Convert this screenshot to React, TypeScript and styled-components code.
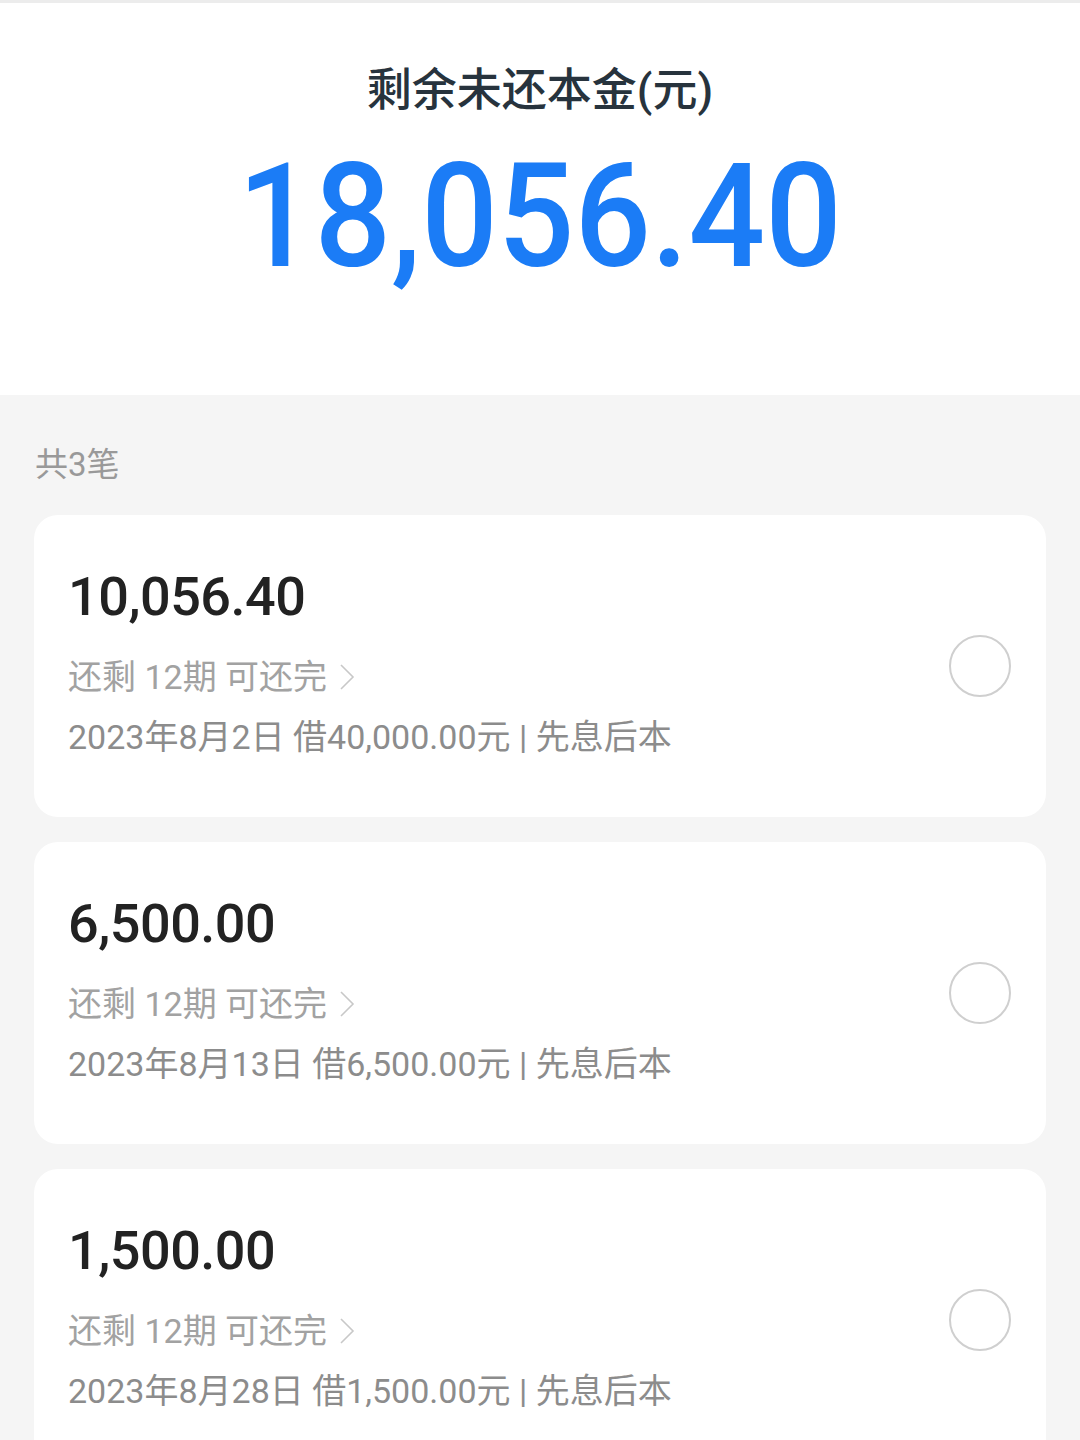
import styled, { createGlobalStyle } from 'styled-components';

const GlobalStyle = createGlobalStyle`
  html, body {
    margin: 0;
    padding: 0;
    background: #f5f5f5;
    font-family: Roboto, "Noto Sans CJK SC", sans-serif;
  }
`;

const Page = styled.div`
  width: 1080px;
  min-height: 1440px;
  background: #f5f5f5;
  overflow: hidden;
`;

const Header = styled.div`
  height: 392px;
  background: #fff;
  border-top: 3px solid #ececec;
  display: flex;
  flex-direction: column;
  align-items: center;
`;

const HeaderTitle = styled.div`
  margin-top: 58px;
  font-size: 45px;
  line-height: 60px;
  color: #27333d;
  font-weight: 500;
`;

const Total = styled.div`
  margin-top: 20px;
  font-size: 145px;
  line-height: 150px;
  color: #1b7cf6;
  font-weight: 500;
  transform: scaleX(0.93);
`;

const Body = styled.div`
  padding: 0 34px;
`;

const Count = styled.div`
  margin-top: 50px;
  margin-bottom: 30px;
  padding-left: 1px;
  font-size: 33px;
  line-height: 40px;
  color: #999;
`;

const List = styled.div`
  display: flex;
  flex-direction: column;
  gap: 25px;
`;

const Card = styled.div`
  height: 302px;
  box-sizing: border-box;
  background: #fff;
  border-radius: 24px;
  padding: 50px 34px 0 34px;
  display: flex;
  align-items: flex-start;
  justify-content: space-between;
`;

const Info = styled.div`
  display: flex;
  flex-direction: column;
`;

const Amount = styled.div`
  font-size: 54px;
  line-height: 64px;
  color: #222;
  font-weight: 500;
  letter-spacing: -0.5px;
`;

const Remain = styled.div`
  margin-top: 26px;
  display: flex;
  align-items: center;
  gap: 12px;
  font-size: 34px;
  line-height: 44px;
  color: #a2a2a2;
`;

const Detail = styled.div`
  margin-top: 16px;
  font-size: 34px;
  line-height: 44px;
  color: #8c8c8c;
`;

const Radio = styled.div`
  margin-top: 70px;
  margin-right: 1px;
  width: 58px;
  height: 58px;
  border-radius: 50%;
  border: 2.5px solid #cfcfcf;
`;

const Chevron = () => (
  <svg width="16" height="30" viewBox="0 0 16 30">
    <path d="M2 3 L14 15 L2 27" fill="none" stroke="#c8c8c8" strokeWidth="1.6" />
  </svg>
);

const loans = [
  { amount: '10,056.40', detail: '2023年8月2日 借40,000.00元 | 先息后本' },
  { amount: '6,500.00', detail: '2023年8月13日 借6,500.00元 | 先息后本' },
  { amount: '1,500.00', detail: '2023年8月28日 借1,500.00元 | 先息后本' },
];

export default function App() {
  return (
    <Page>
      <GlobalStyle />
      <Header>
        <HeaderTitle>剩余未还本金(元)</HeaderTitle>
        <Total>18,056.40</Total>
      </Header>
      <Body>
        <Count>共3笔</Count>
        <List>
          {loans.map((l) => (
            <Card key={l.amount}>
              <Info>
                <Amount>{l.amount}</Amount>
                <Remain>
                  <span>还剩 12期 可还完</span>
                  <Chevron />
                </Remain>
                <Detail>{l.detail}</Detail>
              </Info>
              <Radio />
            </Card>
          ))}
        </List>
      </Body>
    </Page>
  );
}
